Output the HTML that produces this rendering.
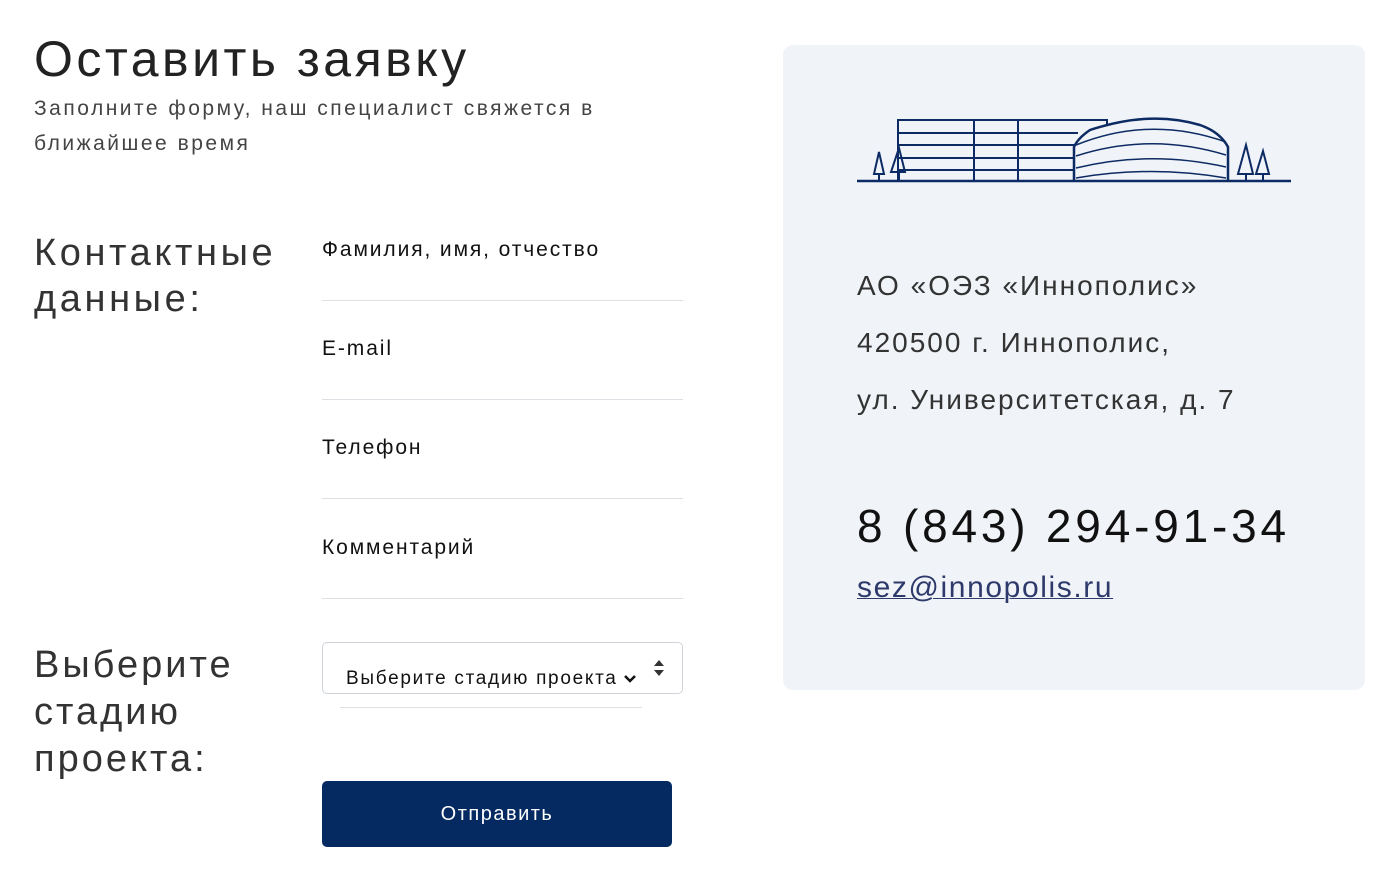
<!DOCTYPE html>
<html><head><meta charset="utf-8"><style>
body{margin:0;width:1400px;height:895px;background:#fff;font-family:"Liberation Sans",sans-serif;color:#222;position:relative;overflow:hidden}
.a{position:absolute;white-space:nowrap}
.line{position:absolute;left:322px;width:361px;height:1px;background:#dcdfe3}
.lbl{font-size:21px;color:#111;letter-spacing:1.9px}
.card{position:absolute;left:783px;top:45px;width:582px;height:645px;background:#f0f3f8;border-radius:10px}
</style></head><body>
<div class="a" style="left:34px;top:30px;font-size:50px;color:#222;letter-spacing:3.5px">Оставить заявку</div>
<div class="a" style="left:34px;top:91px;font-size:21px;color:#444;line-height:35px;letter-spacing:2.5px">Заполните форму, наш специалист свяжется в<br>ближайшее время</div>
<div class="a" style="left:34px;top:230px;font-size:38px;color:#333;line-height:46px;letter-spacing:3.6px">Контактные<br>данные:</div>
<div class="a lbl" style="left:322px;top:238px">Фамилия, имя, отчество</div>
<div class="line" style="top:300px"></div>
<div class="a lbl" style="left:322px;top:337px">E-mail</div>
<div class="line" style="top:399px"></div>
<div class="a lbl" style="left:322px;top:436px">Телефон</div>
<div class="line" style="top:498px"></div>
<div class="a lbl" style="left:322px;top:536px">Комментарий</div>
<div class="line" style="top:598px"></div>
<div class="a" style="left:34px;top:642px;font-size:38px;color:#333;line-height:47px;letter-spacing:3px">Выберите<br>стадию<br>проекта:</div>
<div class="a" style="left:322px;top:642px;width:359px;height:50px;border:1px solid #cfd4da;border-radius:5px"></div>
<div class="a" style="left:346px;top:668px;font-size:19px;color:#111;letter-spacing:1.7px">Выберите стадию проекта</div>
<svg class="a" style="left:623px;top:674px" width="14" height="10"><path d="M2 2L7 7 12 2" stroke="#111" stroke-width="2.5" fill="none"/></svg>
<svg class="a" style="left:653px;top:659px" width="12" height="18"><path d="M1 7L6 1 11 7Z M1 11L6 17 11 11Z" fill="#333"/></svg>
<div class="a" style="left:340px;top:707px;width:302px;height:1px;background:#dcdfe3"></div>
<div class="a" style="left:322px;top:781px;width:350px;height:66px;background:#052a61;border-radius:5px;color:#fff;font-size:20px;text-align:center;line-height:66px;letter-spacing:1.5px">Отправить</div>
<div class="card"></div>
<svg class="a" style="left:850px;top:110px" width="450" height="80" fill="none" stroke="#0c2a63" stroke-width="2">
<line x1="7" y1="71" x2="441" y2="71" stroke-width="2.5"/>
<path d="M48 71V10H257V15"/>
<path d="M48 23H228M48 35H224M48 48H224M48 60H224"/>
<path d="M124 10V71M168 10V71"/>
<path d="M224 71V37Q228 28 240 20Q300 0 350 15Q370 22 378 37V71" stroke-width="2.5"/>
<path d="M226 35Q300 5 376 32M226 46Q300 22 376 45M226 58Q300 40 376 57M226 68Q300 55 376 68" stroke-width="1.5"/>
<path d="M29 70V64H24L29 42L34 64H30" stroke-width="2"/>
<path d="M49 70V62H41L49 38L55 62H50" stroke-width="2"/>
<path d="M396 70V64H388L396 35L403 64H397" stroke-width="2"/>
<path d="M413 70V64H406L413 41L419 64H414" stroke-width="2"/>
</svg>
<div class="a" style="left:857px;top:257px;font-size:28px;color:#333;line-height:57px;letter-spacing:2px">АО «ОЭЗ «Иннополис»<br>420500 г. Иннополис,<br>ул. Университетская, д. 7</div>
<div class="a" style="left:857px;top:499px;font-size:46px;color:#111;letter-spacing:3.8px">8 (843) 294-91-34</div>
<div class="a" style="left:857px;top:571px;font-size:30px;color:#2d3a6b;text-decoration:underline;text-decoration-thickness:1px;letter-spacing:1.6px">sez@innopolis.ru</div>
</body></html>
